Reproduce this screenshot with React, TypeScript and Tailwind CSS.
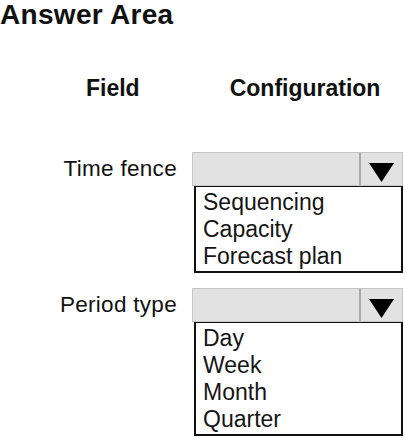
import React from "react";

/* ── Dropdown with its options listed below ─────────────────── */

function Dropdown({ options }: { options: string[] }) {
  return (
    <div className="flex w-[211px] flex-col">
      <div className="flex h-[34px] border border-[#c6c6c6] bg-[#e2e2e2]">
        <div className="flex-1" />
        <div className="flex w-[43px] items-center justify-center border-l-2 border-[#a9a9a9] pt-[6px]">
          <svg viewBox="0 0 25 19" className="h-[19px] w-[25px]" aria-hidden>
            <polygon points="0,0 25,0 12.5,19" fill="#000" />
          </svg>
        </div>
      </div>
      <ul className="ml-[2px] border-2 border-t-[1.5px] border-[#111] pb-[1px] pl-[7px] pt-[2px] text-[23px] leading-[27px] text-[#151515]">
        {options.map((o) => (
          <li key={o}>{o}</li>
        ))}
      </ul>
    </div>
  );
}

const ROWS = [
  { label: "Time fence", options: ["Sequencing", "Capacity", "Forecast plan"] },
  { label: "Period type", options: ["Day", "Week", "Month", "Quarter"] },
];

export default function App() {
  return (
    <div className="h-[438px] w-[405px] overflow-hidden bg-white font-['Liberation_Sans',Arial,sans-serif] text-[#111]">
      <h1 className="pt-[1px] text-[28px] font-bold leading-[28px] tracking-[0.3px]">Answer Area</h1>

      <div className="mt-[48px] flex text-[23px] font-bold leading-none">
        <span className="ml-[86px]">Field</span>
        <span className="ml-[90px]">Configuration</span>
      </div>

      <div className="mt-[52px] flex flex-col gap-[15px]">
        {ROWS.map((r) => (
          <div key={r.label} className="flex items-start">
            <div className="flex h-[34px] w-[177px] items-center justify-end text-[22.5px] tracking-[0.3px]">
              {r.label}
            </div>
            <div className="ml-[15px]">
              <Dropdown options={r.options} />
            </div>
          </div>
        ))}
      </div>
    </div>
  );
}
